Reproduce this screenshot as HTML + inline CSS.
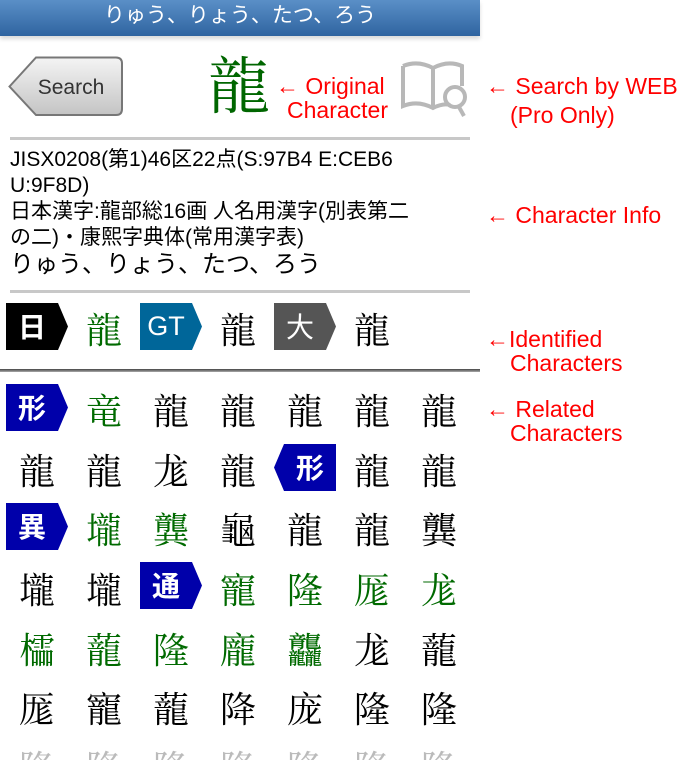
<!DOCTYPE html>
<html><head><meta charset="utf-8"><style>
*{margin:0;padding:0;box-sizing:border-box}
body{width:680px;height:760px;overflow:hidden;background:#fff;position:relative;font-family:"Liberation Sans","Noto Sans CJK JP",sans-serif}
.hdr{position:absolute;left:0;top:0;width:480px;height:36px;background:linear-gradient(#5a8fc7,#2f64a0);color:#fff;font-size:21px;text-align:center;line-height:32px;box-shadow:0 3px 4px rgba(0,0,0,.15)}
.ann{position:absolute;color:#ff0000;font-size:23px;line-height:25px;white-space:nowrap;font-family:"Liberation Sans",sans-serif}
.big{position:absolute;left:208px;top:46px;font-size:62px;line-height:72px;color:#006600;font-family:"Noto Serif CJK SC","Noto Serif CJK JP",serif}
.rule{position:absolute;left:10px;width:460px;height:3px;background:#c8c8c8}
.info{position:absolute;left:10px;top:147px;font-size:21px;line-height:26px;color:#000;font-family:"Liberation Sans","Noto Sans CJK JP",sans-serif}
.c{position:absolute;width:62px;text-align:center;font-size:36px;line-height:47px;font-family:"Noto Serif CJK SC","Noto Serif CJK JP",serif;color:#000}
.g{color:#006a00}
.b{position:absolute;width:62px;height:47px;color:#fff;font-size:28px;line-height:47px;font-family:"Noto Sans CJK JP",sans-serif;font-weight:bold}
.b span{position:absolute;left:0;width:52px;text-align:center;top:0}
</style></head><body>
<div class="hdr">りゅう、りょう、たつ、ろう</div>
<svg style="position:absolute;left:8px;top:56px" width="117" height="61"><defs><linearGradient id="bg" x1="0" y1="0" x2="0" y2="1"><stop offset="0" stop-color="#f4f4f4"/><stop offset="1" stop-color="#c4c4c4"/></linearGradient></defs><path d="M1.5 30.5 L28 1.5 H108 Q114 1.5 114 7.5 V53 Q114 59 108 59 H28 Z" fill="url(#bg)" stroke="#777" stroke-width="2"/><text x="63" y="38" font-family="Liberation Sans,sans-serif" font-size="21" fill="#333" text-anchor="middle">Search</text></svg>
<div class="big">龍</div>
<div class="ann" style="left:276px;top:74px">← Original</div>
<div class="ann" style="left:287px;top:98px">Character</div>
<svg style="position:absolute;left:398px;top:60px" width="72" height="60" fill="none" stroke="#b8b8b8" stroke-width="4"><path d="M5 6 Q20 0 35 8 Q50 0 64 6 V26 M5 6 V46 Q20 40 35 48 Q45 43 52 45 M35 8 V48"/><circle cx="57" cy="37" r="10"/><path d="M61 47 L66 56"/></svg>
<div class="ann" style="left:486px;top:74px">← Search by WEB</div>
<div class="ann" style="left:510px;top:103px">(Pro Only)</div>
<div class="rule" style="top:137px"></div>
<div class="info">JISX0208(第1)46区22点(S:97B4 E:CEB6<br>U:9F8D)<br>日本漢字:龍部総16画 人名用漢字(別表第二<br>の二)・康熙字典体(常用漢字表)<br><span style="font-size:24px;line-height:28px">りゅう、りょう、たつ、ろう</span></div>
<div class="ann" style="left:486px;top:203px">← Character Info</div>
<div class="rule" style="top:290px"></div>
<div class="ann" style="left:486px;top:327px">←Identified</div>
<div class="ann" style="left:510px;top:351px">Characters</div>
<div class="ann" style="left:486px;top:397px">← Related</div>
<div class="ann" style="left:510px;top:421px">Characters</div>
<div style="position:absolute;left:0;top:369px;width:480px;height:3px;background:linear-gradient(#444,#aaa)"></div>

<svg style="position:absolute;left:6px;top:303px" width="62" height="47"><path d="M0 0H52L62 23.5L52 47H0Z" fill="#000"/></svg><div class="b" style="left:6px;top:303px"><span>日</span></div>
<div class="c g" style="left:73px;top:305px">龍</div>
<svg style="position:absolute;left:140px;top:303px" width="62" height="47"><path d="M0 0H52L62 23.5L52 47H0Z" fill="#006699"/></svg><div class="b" style="left:140px;top:303px;font-family:'Liberation Sans';font-size:27px;font-weight:normal"><span>GT</span></div>
<div class="c" style="left:207px;top:305px">龍</div>
<svg style="position:absolute;left:274px;top:303px" width="62" height="47"><path d="M0 0H52L62 23.5L52 47H0Z" fill="#555"/></svg><div class="b" style="left:274px;top:303px;font-weight:normal"><span>大</span></div>
<div class="c" style="left:341px;top:305px">龍</div>

<svg style="position:absolute;left:6px;top:384px" width="62" height="47"><path d="M0 0H52L62 23.5L52 47H0Z" fill="#0000aa"/></svg><div class="b" style="left:6px;top:384px"><span>形</span></div>
<div class="c g" style="left:73px;top:386px">竜</div><div class="c" style="left:140px;top:386px">龍</div><div class="c" style="left:207px;top:386px">龍</div><div class="c" style="left:274px;top:386px">龍</div><div class="c" style="left:341px;top:386px">龍</div><div class="c" style="left:408px;top:386px">龍</div>

<div class="c" style="left:6px;top:446px">龍</div><div class="c" style="left:73px;top:446px">龍</div><div class="c" style="left:140px;top:446px">尨</div><div class="c" style="left:207px;top:446px">龍</div>
<svg style="position:absolute;left:274px;top:444px" width="62" height="47"><path d="M10 0H62V47H10L0 23.5Z" fill="#0000aa"/></svg><div class="b" style="left:284px;top:444px"><span>形</span></div>
<div class="c" style="left:341px;top:446px">龍</div><div class="c" style="left:408px;top:446px">龍</div>

<svg style="position:absolute;left:6px;top:503px" width="62" height="47"><path d="M0 0H52L62 23.5L52 47H0Z" fill="#0000aa"/></svg><div class="b" style="left:6px;top:503px"><span>異</span></div>
<div class="c g" style="left:73px;top:505px">壠</div><div class="c g" style="left:140px;top:505px">龔</div><div class="c" style="left:207px;top:505px">龜</div><div class="c" style="left:274px;top:505px">龍</div><div class="c" style="left:341px;top:505px">龍</div><div class="c" style="left:408px;top:505px">龔</div>

<div class="c" style="left:6px;top:565px">壠</div><div class="c" style="left:73px;top:565px">壠</div>
<svg style="position:absolute;left:140px;top:562px" width="62" height="47"><path d="M0 0H52L62 23.5L52 47H0Z" fill="#0000aa"/></svg><div class="b" style="left:140px;top:562px"><span>通</span></div>
<div class="c g" style="left:207px;top:565px">寵</div><div class="c g" style="left:274px;top:565px">隆</div><div class="c g" style="left:341px;top:565px">厖</div><div class="c g" style="left:408px;top:565px">尨</div>

<div class="c g" style="left:6px;top:625px">櫺</div><div class="c g" style="left:73px;top:625px">蘢</div><div class="c g" style="left:140px;top:625px">隆</div><div class="c g" style="left:207px;top:625px">龐</div><div class="c g" style="left:274px;top:625px">龘</div><div class="c" style="left:341px;top:625px">尨</div><div class="c" style="left:408px;top:625px">蘢</div>

<div class="c" style="left:6px;top:684px">厖</div><div class="c" style="left:73px;top:684px">寵</div><div class="c" style="left:140px;top:684px">蘢</div><div class="c" style="left:207px;top:684px">降</div><div class="c" style="left:274px;top:684px">庞</div><div class="c" style="left:341px;top:684px">隆</div><div class="c" style="left:408px;top:684px">隆</div>

<div style="position:absolute;left:0;top:743px;width:480px;height:17px;overflow:hidden;color:#bbb">
<div class="c" style="left:6px;top:0;color:#bbb">降</div><div class="c" style="left:73px;top:0;color:#bbb">降</div><div class="c" style="left:140px;top:0;color:#bbb">隆</div><div class="c" style="left:207px;top:0;color:#bbb">降</div><div class="c" style="left:274px;top:0;color:#bbb">隆</div><div class="c" style="left:341px;top:0;color:#bbb">降</div><div class="c" style="left:408px;top:0;color:#bbb">隆</div>
</div>
</body></html>
